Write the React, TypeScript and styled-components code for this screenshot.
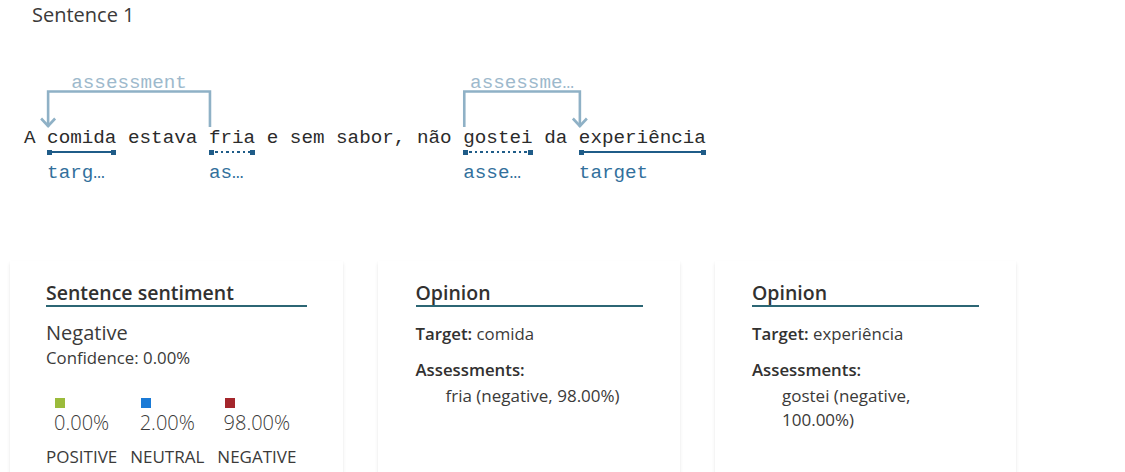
import React from "react";
import styled, { createGlobalStyle } from "styled-components";

const CW = 11.56;
const MONO_SIZE = CW / 0.6;

const Global = createGlobalStyle`
  html, body { margin: 0; padding: 0; background: #ffffff; overflow: hidden; }
  body { font-family: "Open Sans", "Noto Sans", sans-serif; color: #323130; }
`;

const Page = styled.div`
  display: flex;
  flex-direction: column;
  width: 1125px;
  height: 472px;
  padding-top: 3px;
  box-sizing: border-box;
`;

const Title = styled.div`
  margin-left: 32px;
  font-size: 20px;
  line-height: 24px;
  color: #3b3a39;
`;

const SentenceBlock = styled.div`
  position: relative;
  margin: 33px 0 0 24px;
  padding-top: 67px;
`;

const ArcLayer = styled.svg`
  position: absolute;
  left: 0;
  top: 0;
  overflow: visible;
`;

const TokenRow = styled.div`
  display: flex;
  align-items: flex-start;
`;

const Token = styled.div<{ $chars: number }>`
  display: flex;
  flex-direction: column;
  width: ${(p) => p.$chars * CW}px;
  flex: none;
`;

const Word = styled.div`
  font-family: "Liberation Mono", "DejaVu Sans Mono", monospace;
  font-size: ${MONO_SIZE}px;
  line-height: 22px;
  white-space: pre;
  color: #2b2b2b;
`;

const Underline = styled.div`
  display: flex;
  align-items: center;
  height: 6px;
`;

const Cap = styled.div`
  width: 5px;
  height: 5px;
  background: #1f5c88;
  flex: none;
`;

const Line = styled.div<{ $dotted?: boolean }>`
  flex: 1;
  height: 2.5px;
  background: ${(p) =>
    p.$dotted
      ? "repeating-linear-gradient(to right, transparent 0 1.5px, #1f5c88 1.5px 4px, transparent 4px 5.5px)"
      : "#1f5c88"};
`;

const TokenLabel = styled.div`
  margin-top: 7px;
  font-family: "Liberation Mono", "DejaVu Sans Mono", monospace;
  font-size: ${MONO_SIZE}px;
  line-height: 22px;
  white-space: pre;
  color: #32709c;
`;

const Cards = styled.div`
  display: flex;
  gap: 35px;
  margin: 77px 0 0 10px;
`;

const Card = styled.div<{ $w: number; $pad: number }>`
  width: ${(p) => p.$w}px;
  min-height: 240px;
  box-sizing: border-box;
  padding: 20px ${(p) => p.$pad}px;
  background: #ffffff;
  box-shadow: 0 1.6px 3.6px rgba(0, 0, 0, 0.09), 0 0.3px 0.9px rgba(0, 0, 0, 0.07);
  flex: none;
`;

const CardTitle = styled.div`
  font-size: 19.5px;
  font-weight: 600;
  line-height: 24px;
  color: #323130;
  border-bottom: 2px solid #2c6674;
  white-space: nowrap;
`;

const SentimentName = styled.div`
  margin-top: 13px;
  font-size: 20px;
  line-height: 26px;
  color: #3b3a39;
`;

const Confidence = styled.div`
  margin-top: 1px;
  font-size: 16.8px;
  line-height: 22px;
  color: #3b3a39;
`;

const ScoreRow = styled.div`
  display: flex;
  gap: 13px;
  margin-top: 29px;
`;

const ScoreCol = styled.div`
  display: flex;
  flex-direction: column;
  align-items: center;
`;

const ScoreValue = styled.div`
  display: flex;
  flex-direction: column;
  align-items: flex-start;
`;

const Swatch = styled.div<{ $c: string }>`
  width: 10px;
  height: 10px;
  margin-left: 1px;
  background: ${(p) => p.$c};
`;

const Percent = styled.div`
  margin-top: 2px;
  font-size: 20px;
  font-weight: 300;
  line-height: 26px;
  color: #3b3a39;
`;

const ScoreName = styled.div`
  margin-top: 10px;
  font-size: 17px;
  line-height: 22px;
  color: #3b3a39;
`;

const Field = styled.div<{ $gap: number }>`
  margin-top: ${(p) => p.$gap}px;
  font-size: 16.8px;
  line-height: 22px;
  color: #3b3a39;
`;

const FieldKey = styled.span`
  font-weight: 600;
  color: #323130;
`;

const AssessmentList = styled.div`
  margin-top: 3px;
  padding: 0 12px 0 30px;
`;

const AssessmentItem = styled.div`
  font-size: 17px;
  line-height: 24px;
  color: #3b3a39;
`;

type Seg = { text: string; kind?: "target" | "assessment"; label?: string };

const segments: Seg[] = [
  { text: "A " },
  { text: "comida", kind: "target", label: "targ…" },
  { text: " estava " },
  { text: "fria", kind: "assessment", label: "as…" },
  { text: " e sem sabor, não " },
  { text: "gostei", kind: "assessment", label: "asse…" },
  { text: " da " },
  { text: "experiência", kind: "target", label: "target" },
];

const arcs = [
  { from: 16, to: 2, label: "assessment" },
  { from: 38, to: 48, label: "assessme…" },
];

const ARC_Y = 31.5;
const ARC_BOTTOM = 67;
const ARC_COLOR = "#8fb1c6";

function Arcs() {
  const total = 59 * CW;
  return (
    <ArcLayer width={total} height={ARC_BOTTOM} viewBox={`0 0 ${total} ${ARC_BOTTOM}`}>
      {arcs.map((a, i) => {
        const fx = a.from * CW + 1;
        const tx = a.to * CW + 1;
        const mid = (fx + tx) / 2;
        return (
          <g key={i}>
            <path
              d={`M${fx},${ARC_BOTTOM} V${ARC_Y} H${tx} V${ARC_BOTTOM - 0.5}`}
              fill="none"
              stroke={ARC_COLOR}
              strokeWidth={2.6}
            />
            <path
              d={`M${tx - 7},${ARC_BOTTOM - 8.5} L${tx},${ARC_BOTTOM - 1} L${tx + 7},${ARC_BOTTOM - 8.5}`}
              fill="none"
              stroke={ARC_COLOR}
              strokeWidth={2.6}
            />
            <text
              x={mid}
              y={ARC_Y - 3}
              textAnchor="middle"
              fontFamily='"Liberation Mono", "DejaVu Sans Mono", monospace'
              fontSize={MONO_SIZE}
              fill="#9db9cc"
            >
              {a.label}
            </text>
          </g>
        );
      })}
    </ArcLayer>
  );
}

function Sentence() {
  return (
    <SentenceBlock>
      <Arcs />
      <TokenRow>
        {segments.map((s, i) => (
          <Token key={i} $chars={s.text.length}>
            <Word>{s.text}</Word>
            {s.kind && (
              <>
                <Underline>
                  <Cap />
                  <Line $dotted={s.kind === "assessment"} />
                  <Cap />
                </Underline>
                <TokenLabel>{s.label}</TokenLabel>
              </>
            )}
          </Token>
        ))}
      </TokenRow>
    </SentenceBlock>
  );
}

const scores = [
  { c: "#9bbb3b", v: "0.00%", n: "POSITIVE" },
  { c: "#1a7ad6", v: "2.00%", n: "NEUTRAL" },
  { c: "#a4262c", v: "98.00%", n: "NEGATIVE" },
];

const opinions = [
  { target: "comida", assessments: ["fria (negative, 98.00%)"], w: 302, pad: 37.5 },
  { target: "experiência", assessments: ["gostei (negative, 100.00%)"], w: 301, pad: 37 },
];

export default function App() {
  return (
    <Page>
      <Global />
      <Title>Sentence 1</Title>
      <Sentence />
      <Cards>
        <Card $w={333} $pad={36}>
          <CardTitle>Sentence sentiment</CardTitle>
          <SentimentName>Negative</SentimentName>
          <Confidence>Confidence: 0.00%</Confidence>
          <ScoreRow>
            {scores.map((s) => (
              <ScoreCol key={s.n}>
                <ScoreValue>
                  <Swatch $c={s.c} />
                  <Percent>{s.v}</Percent>
                </ScoreValue>
                <ScoreName>{s.n}</ScoreName>
              </ScoreCol>
            ))}
          </ScoreRow>
        </Card>
        {opinions.map((o) => (
          <Card key={o.target} $w={o.w} $pad={o.pad}>
            <CardTitle>Opinion</CardTitle>
            <Field $gap={16}>
              <FieldKey>Target:</FieldKey> {o.target}
            </Field>
            <Field $gap={14}>
              <FieldKey>Assessments:</FieldKey>
            </Field>
            <AssessmentList>
              {o.assessments.map((a) => (
                <AssessmentItem key={a}>{a}</AssessmentItem>
              ))}
            </AssessmentList>
          </Card>
        ))}
      </Cards>
    </Page>
  );
}
